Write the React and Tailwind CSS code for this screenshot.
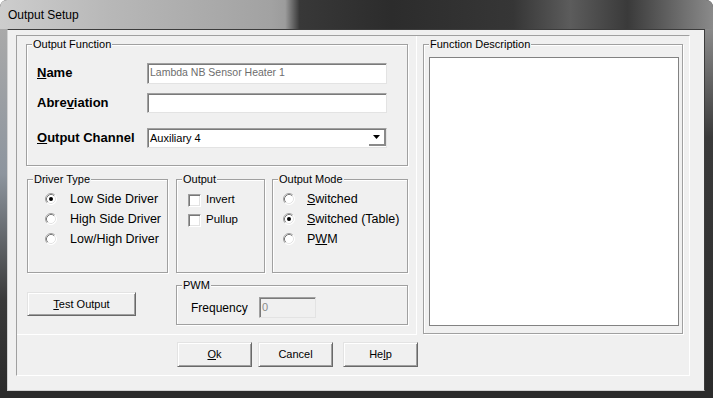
const group = "relative border border-[#a0a0a0] shadow-[inset_1px_1px_0_#fff,1px_1px_0_#fff]";
const sunken = "border border-t-[#a0a0a0] border-l-[#a0a0a0] border-r-[#e3e3e3] border-b-[#e3e3e3] shadow-[inset_1px_1px_0_#7a7a7a]";
const raised = "border border-t-[#e3e3e3] border-l-[#e3e3e3] border-r-[#696969] border-b-[#696969] shadow-[inset_1px_1px_0_#fff,inset_-1px_-1px_0_#a0a0a0] bg-[#f0f0f0] text-[11px] flex items-center justify-center";

const GroupLabel = ({ children }) => (
    <span className="absolute -top-[7px] left-[5px] bg-[#f0f0f0] px-[1px] text-[11px] leading-[13px]">{children}</span>
);

// classic 3d radio circle
const Radio = ({ checked }) => (
    <svg width="12" height="12" viewBox="0 0 12 12" className="shrink-0">
        <circle cx="6" cy="6" r="5.5" fill="#fff" />
        <path d="M2.11 9.89 A5.5 5.5 0 0 1 9.89 2.11" fill="none" stroke="#a0a0a0" />
        <path d="M2.82 9.18 A4.5 4.5 0 0 1 9.18 2.82" fill="none" stroke="#787878" />
        <path d="M9.89 2.11 A5.5 5.5 0 0 1 2.11 9.89" fill="none" stroke="#fff" />
        <path d="M9.18 2.82 A4.5 4.5 0 0 1 2.82 9.18" fill="none" stroke="#e3e3e3" />
        {checked && <circle cx="6" cy="6" r="2" fill="#000" />}
    </svg>
);

const Check = () => (
    <div className="w-[13px] h-[13px] shrink-0 bg-white border border-t-[#a0a0a0] border-l-[#a0a0a0] border-r-white border-b-white shadow-[inset_1px_1px_0_#787878,inset_-1px_-1px_0_#e3e3e3]" />
);

const RadioRow = ({ checked, gap, children }) => (
    <div className={`flex items-center h-[20px] ${gap}`}>
        <Radio checked={checked} />
        <span className="text-[12.5px] leading-[15px]">{children}</span>
    </div>
);

export default function App() {
    return (
        <div className="w-[713px] h-[398px] flex flex-col bg-[#2b2b2b] overflow-hidden rounded-t-[7px] font-['Liberation_Sans',Arial,sans-serif] text-black select-none">
            {/* Title bar */}
            <div className="h-[29px] shrink-0 flex items-center pl-[8px] text-[12px] bg-[linear-gradient(to_right,#cdcdcd_0%,#b8b8b8_15%,#a2a2a2_38%,#9c9c9c_40%,#383838_42%,#2c2c2c_55%,#363636_72%,#5c5c5c_80%,#3a3a3a_88%,#707070_96%,#8a8a8a_100%)]">
                Output Setup
            </div>

            <div className="flex h-[362px]">
                <div className="w-[7px] bg-[linear-gradient(to_bottom,#a9a9a9,#8d959e_40%,#3a3a3a_75%,#2b2b2b)]" />

                {/* Client area */}
                <div className="w-[698px] h-[362px] bg-[#f0f0f0] border border-t-[#3c3c3c] border-r-[#3c3c3c] border-l-[#d0d0d0] border-b-[#d0d0d0] pl-[8px] pt-[5px]">
                    <div className="w-[674px] h-[341px] border border-t-[#a0a0a0] border-l-[#a0a0a0] border-r-white border-b-white flex flex-col">
                        <div className="flex h-[299px]">
                            {/* Left panel */}
                            <div className="w-[400px] h-[299px] border-r border-b border-white flex flex-col">
                                {/* Output Function */}
                                <div className={`${group} ml-[9px] mt-[8px] w-[382px] h-[122px] pt-[18px] pl-[10px]`}>
                                    <GroupLabel>Output Function</GroupLabel>
                                    <div className="flex items-center h-[20px]">
                                        <span className="w-[110px] text-[13px] font-bold"><u>N</u>ame</span>
                                        <div className={`${sunken} w-[240px] h-[21px] bg-white flex items-center pl-[2px] text-[10.5px] text-[#6d6d6d]`}>
                                            Lambda NB Sensor Heater 1
                                        </div>
                                    </div>
                                    <div className="flex items-center h-[20px] mt-[10px]">
                                        <span className="w-[110px] text-[13px] font-bold">Abre<u>v</u>iation</span>
                                        <div className={`${sunken} w-[240px] h-[20px] bg-white`} />
                                    </div>
                                    <div className="flex items-center h-[20px] mt-[15px]">
                                        <span className="w-[110px] text-[13px] font-bold"><u>O</u>utput Channel</span>
                                        <div className={`${sunken} w-[240px] h-[20px] bg-white flex items-center justify-between pl-[2px] text-[11px]`}>
                                            <span>Auxiliary 4</span>
                                            <div className="w-[17px] h-[16px] bg-white border-r-2 border-b-2 border-[#8a8a8a] flex items-center justify-center">
                                                <svg width="7" height="4" viewBox="0 0 7 4">
                                                    <polygon points="0,0 7,0 3.5,4" fill="#000" />
                                                </svg>
                                            </div>
                                        </div>
                                    </div>
                                </div>

                                {/* Driver Type / Output / Output Mode */}
                                <div className="flex mt-[13px] ml-[10px] h-[94px]">
                                    <div className={`${group} w-[141px] h-[94px] pt-[9px] pl-[17px]`}>
                                        <GroupLabel>Driver Type</GroupLabel>
                                        <RadioRow checked gap="gap-[13px]">Low Side Driver</RadioRow>
                                        <RadioRow gap="gap-[13px]">High Side Driver</RadioRow>
                                        <RadioRow gap="gap-[13px]">Low/High Driver</RadioRow>
                                    </div>
                                    <div className={`${group} ml-[8px] w-[89px] h-[94px] pt-[10px] pl-[11px]`}>
                                        <GroupLabel>Output</GroupLabel>
                                        <div className="flex items-center h-[20px] gap-[5px]">
                                            <Check />
                                            <span className="text-[11.5px]">Invert</span>
                                        </div>
                                        <div className="flex items-center h-[20px] gap-[5px]">
                                            <Check />
                                            <span className="text-[11.5px]">Pullup</span>
                                        </div>
                                    </div>
                                    <div className={`${group} ml-[7px] w-[136px] h-[94px] pt-[9px] pl-[10px]`}>
                                        <GroupLabel>Output Mode</GroupLabel>
                                        <RadioRow gap="gap-[12px]"><u>S</u>witched</RadioRow>
                                        <RadioRow checked gap="gap-[12px]"><u>S</u>witched (Table)</RadioRow>
                                        <RadioRow gap="gap-[12px]">P<u>W</u>M</RadioRow>
                                    </div>
                                </div>

                                {/* Test Output / PWM */}
                                <div className="flex mt-[12px] ml-[10px]">
                                    <button className={`${raised} mt-[7px] w-[109px] h-[24px]`}>
                                        <span><u>T</u>est Output</span>
                                    </button>
                                    <div className={`${group} ml-[40px] w-[232px] h-[40px] pt-[11px] pl-[14px]`}>
                                        <GroupLabel>PWM</GroupLabel>
                                        <div className="flex items-center h-[21px]">
                                            <span className="w-[68px] text-[12px]">Frequency</span>
                                            <div className={`${sunken} w-[57px] h-[21px] bg-[#f0f0f0] flex items-center pl-[2px] text-[11px] text-[#8a8a8a]`}>
                                                0
                                            </div>
                                        </div>
                                    </div>
                                </div>
                            </div>

                            {/* Right panel */}
                            <div className="flex-1">
                                <div className={`${group} ml-[6px] mt-[8px] w-[260px] h-[290px]`}>
                                    <GroupLabel>Function Description</GroupLabel>
                                    <div className="ml-[5px] mt-[12px] w-[250px] h-[269px] bg-white border border-[#828282]" />
                                </div>
                            </div>
                        </div>

                        {/* Buttons */}
                        <div className="flex pl-[160px] pt-[7px]">
                            <button className={`${raised} w-[75px] h-[25px]`}><span><u>O</u>k</span></button>
                            <button className={`${raised} ml-[6px] w-[75px] h-[25px]`}>Cancel</button>
                            <button className={`${raised} ml-[10px] w-[75px] h-[25px]`}><span>He<u>l</u>p</span></button>
                        </div>
                    </div>
                </div>

                <div className="w-[8px] bg-[linear-gradient(to_bottom,#8a8a8a,#3a3a3a_30%,#2b2b2b)]" />
            </div>

            <div className="h-[7px] bg-[#2b2b2b]" />
        </div>
    );
}
